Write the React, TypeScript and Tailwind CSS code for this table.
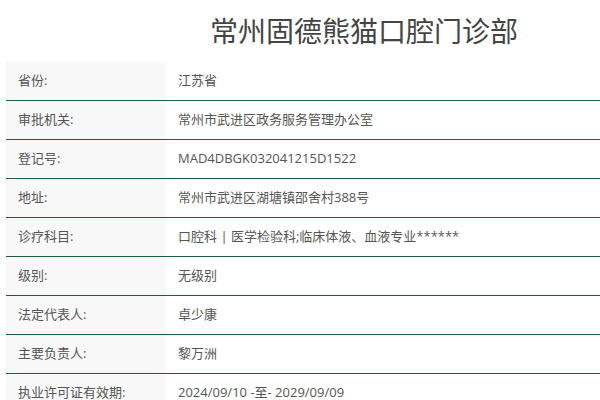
const rows: [string, string][] = [
  ['省份:', '江苏省'],
  ['审批机关:', '常州市武进区政务服务管理办公室'],
  ['登记号:', 'MAD4DBGK032041215D1522'],
  ['地址:', '常州市武进区湖塘镇邵舍村388号'],
  ['诊疗科目:', '口腔科 | 医学检验科;临床体液、血液专业******'],
  ['级别:', '无级别'],
  ['法定代表人:', '卓少康'],
  ['主要负责人:', '黎万洲'],
  ['执业许可证有效期:', '2024/09/10 -至- 2029/09/09'],
];

export default function App() {
  return (
    <div
      className="w-[600px] h-[400px] overflow-hidden bg-white text-[#555]"
      style={{ fontFamily: '"Open Sans", "Noto Sans CJK SC", sans-serif' }}
    >
      <h1 className="pt-[12px] pl-[210px] h-[62px] text-[28px] leading-[38px] text-[#444] font-normal">
        常州固德熊猫口腔门诊部
      </h1>
      <div className="ml-[6px]">
        {rows.map(([label, value]) => (
          <div key={label} className="flex h-[39px] border-b border-[#1f5a3c]">
            <div className="w-[160px] shrink-0 bg-[#f8f8f8] pl-[12px] flex items-center text-[13px]">
              {label}
            </div>
            <div className="flex-1 pl-[12px] flex items-center text-[13px] whitespace-nowrap">{value}</div>
          </div>
        ))}
      </div>
    </div>
  );
}
